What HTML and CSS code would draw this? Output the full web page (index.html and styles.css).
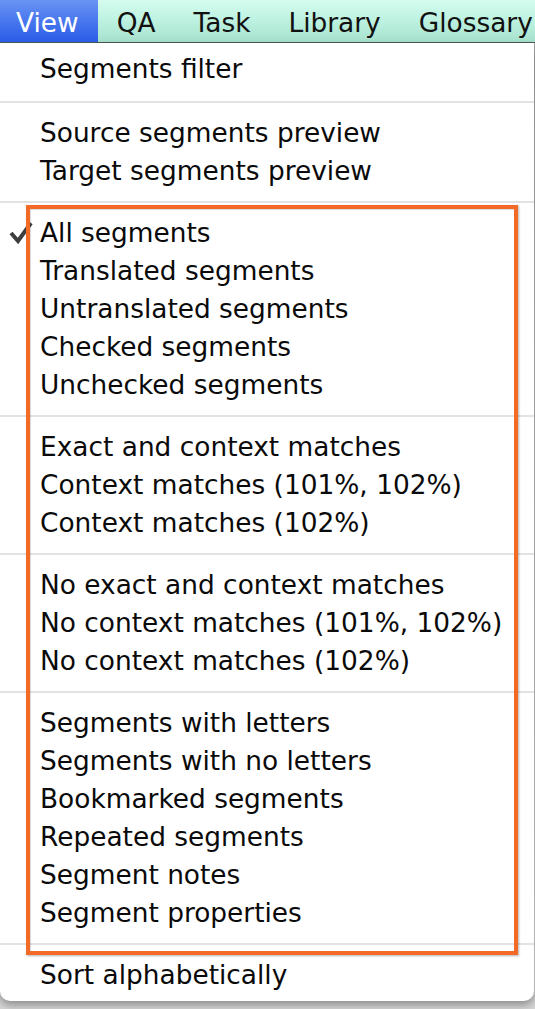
FILE: index.html
```html
<!DOCTYPE html>
<html>
<head>
<meta charset="utf-8">
<link rel="stylesheet" href="styles.css">
</head>
<body>
<div class="menubar">
  <span class="mb-item first active">View</span>
  <span class="mb-item">QA</span>
  <span class="mb-item">Task</span>
  <span class="mb-item">Library</span>
  <span class="mb-item">Glossary</span>
</div>
<div class="menu">
  <div class="item"><span class="mark"></span>Segments filter</div>
  <div class="sep sep-first"></div>
  <div class="item"><span class="mark"></span>Source segments preview</div>
  <div class="item"><span class="mark"></span>Target segments preview</div>
  <div class="sep"></div>
  <div class="item"><span class="mark"><svg width="40" height="38" viewBox="0 0 40 38"><path d="M11 20 L18 28 L31 10" fill="none" stroke="#3e3e3e" stroke-width="4" stroke-linejoin="miter"/></svg></span>All segments</div>
  <div class="item"><span class="mark"></span>Translated segments</div>
  <div class="item"><span class="mark"></span>Untranslated segments</div>
  <div class="item"><span class="mark"></span>Checked segments</div>
  <div class="item"><span class="mark"></span>Unchecked segments</div>
  <div class="sep"></div>
  <div class="item"><span class="mark"></span>Exact and context matches</div>
  <div class="item"><span class="mark"></span>Context matches (101%, 102%)</div>
  <div class="item"><span class="mark"></span>Context matches (102%)</div>
  <div class="sep"></div>
  <div class="item"><span class="mark"></span>No exact and context matches</div>
  <div class="item"><span class="mark"></span>No context matches (101%, 102%)</div>
  <div class="item"><span class="mark"></span>No context matches (102%)</div>
  <div class="sep"></div>
  <div class="item"><span class="mark"></span>Segments with letters</div>
  <div class="item"><span class="mark"></span>Segments with no letters</div>
  <div class="item"><span class="mark"></span>Bookmarked segments</div>
  <div class="item"><span class="mark"></span>Repeated segments</div>
  <div class="item"><span class="mark"></span>Segment notes</div>
  <div class="item"><span class="mark"></span>Segment properties</div>
  <div class="sep"></div>
  <div class="item"><span class="mark"></span>Sort alphabetically</div>
</div>
<div class="annot"></div>
</body>
</html>
```
FILE: styles.css
```css
html, body {
  margin: 0;
  padding: 0;
}
body {
  width: 535px;
  height: 1009px;
  overflow: hidden;
  position: relative;
  background: linear-gradient(#a8a8a8, #d6d6d6 1005px);
  font-family: "DejaVu Sans", sans-serif;
  font-size: 26.4px;
  color: #000;
}
.menubar {
  display: flex;
  height: 42px;
  border-bottom: 1px solid #4d5a55;
  background: linear-gradient(#d4fcef 0%, #bff2e2 45%, #a6e2cd 100%);
  white-space: nowrap;
  overflow: hidden;
}
.mb-item {
  height: 42px;
  line-height: 46px;
  padding: 0 19px;
  color: #111;
}
.mb-item.first {
  padding-left: 16px;
}
.mb-item.active {
  color: #fff;
  background: linear-gradient(#6a94f4 0%, #4877ee 50%, #2b5ce6 100%);
}
.menu {
  width: 534px;
  background: #fff;
  padding: 6px 0 8px;
  border-radius: 0 0 10px 10px;
  box-shadow: 0 4px 8px rgba(0, 0, 0, 0.35);
}
.item {
  display: flex;
  height: 38px;
  line-height: 40px;
  white-space: nowrap;
  color: #0a0a0a;
}
.mark {
  flex: 0 0 40px;
  width: 40px;
  height: 38px;
}
.mark svg {
  display: block;
}
.sep {
  height: 2px;
  background: #e2e2e2;
  margin: 12px 0 10px;
}
.sep-first {
  margin-top: 14px;
}
.annot {
  position: absolute;
  left: 26px;
  top: 205px;
  width: 484px;
  height: 742px;
  border: 4px solid #f36a26;
  box-shadow: 1px 1px 2px rgba(0, 0, 0, 0.3), inset 1px 1px 1px rgba(0, 0, 0, 0.15);
}
```
